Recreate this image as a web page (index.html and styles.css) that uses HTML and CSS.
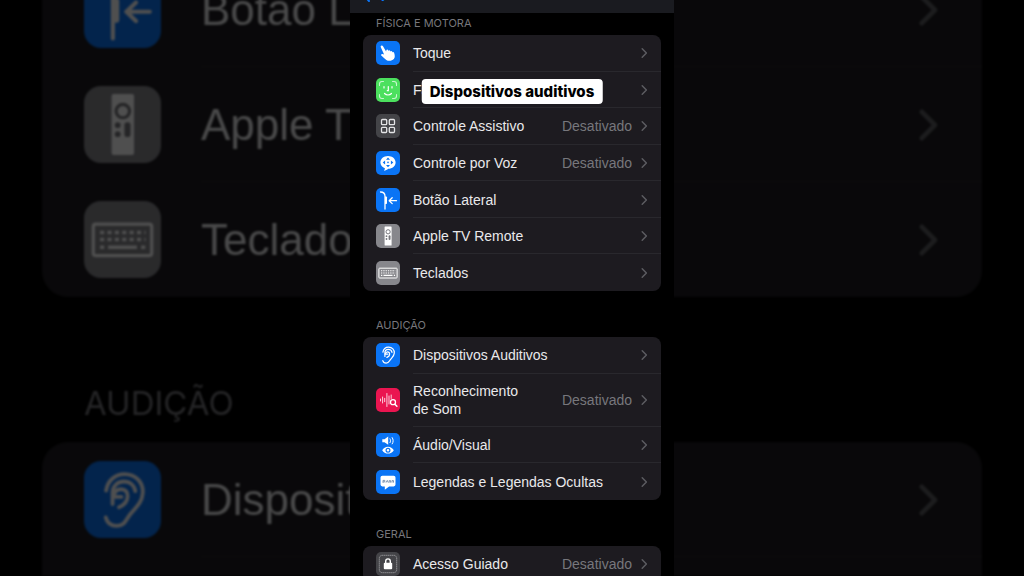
FILE: index.html
```
<!DOCTYPE html>
<html lang="pt-BR">
<head>
  <meta charset="utf-8">
  <title>Acessibilidade</title>
  <link rel="stylesheet" href="styles.css">
</head>
<body>
  <!-- icon set -->
  <svg class="sprite" aria-hidden="true">
    <symbol id="chevron" viewBox="0 0 7 12">
      <path d="M1.200 1.800 5.400 6 1.200 10.200" fill="none" stroke="currentColor" stroke-width="1.500" stroke-linecap="round" stroke-linejoin="round"/>
    </symbol>
    <symbol id="touch" viewBox="0 0 24 24">
      <path fill="#fff" d="M5.200 4.800c.7-.5 1.400-.2 1.800.5l3.100 5.200.3-1.500c.2-.8 1.500-.8 1.700 0l.3.900c.2-.9 1.600-.9 1.900 0l.2.7c.3-.8 1.500-.7 1.800.1l.2.7c.4-.6 1.400-.4 1.600.4.8 2.500 1.100 4.600-.3 6.200-1.800 2-5.300 2.300-7.500.9-1.900-1.200-3.400-2.700-5-4.300-.7-.8.1-1.900 1.100-1.700l1.700.5L4.800 6.300c-.3-.6-.2-1.200.4-1.500z"/>
    </symbol>
    <symbol id="face" viewBox="0 0 24 24">
      <g fill="none" stroke="#fff" stroke-linecap="round">
        <path stroke-width="1.100" opacity=".7" d="M3.500 7.500V6A2.500 2.500 0 0 1 6 3.500h1.500M16.500 3.500H18A2.500 2.500 0 0 1 20.500 6v1.500M20.500 16.500V18a2.500 2.500 0 0 1-2.500 2.500h-1.500M7.500 20.500H6A2.500 2.500 0 0 1 3.500 18v-1.500"/>
        <path stroke-width="1.200" d="M8 8.500v1.500M16 8.500v1.500M12.300 8.500v4.200h-1M8.500 15.500c2 1.900 5 1.900 7 0"/>
      </g>
    </symbol>
    <symbol id="switch" viewBox="0 0 24 24">
      <g fill="none" stroke="#e4e4e6" stroke-width="1.300">
        <rect x="5.500" y="5.500" width="5.200" height="5.200" rx="1"/>
        <rect x="13.300" y="5.500" width="5.200" height="5.200" rx="1"/>
        <rect x="5.500" y="13.300" width="5.200" height="5.200" rx="1"/>
        <rect x="13.300" y="13.300" width="5.200" height="5.200" rx="1"/>
      </g>
    </symbol>
    <symbol id="voice" viewBox="0 0 24 24">
      <path fill="#fff" d="M12 5c4.300 0 7.600 2.800 7.600 6.400s-3.300 6.300-7.300 6.400c-1.200 1.200-2.700 1.800-4.400 1.900.7-.7 1-1.600 1-2.500-2.700-1-4.500-3.200-4.500-5.800C4.400 7.800 7.700 5 12 5z"/>
      <path fill="#0a74f5" d="m12 6.600 2 2.200h-4zM12 16.200l2-2.200h-4zM6.700 11.400l2.400-2v4zM17.300 11.400l-2.400-2v4z"/>
      <circle cx="12" cy="11.400" r=".8" fill="#0a74f5"/>
    </symbol>
    <symbol id="side" viewBox="0 0 24 24">
      <path fill="none" stroke="#fff" stroke-width="1.300" stroke-linecap="round" stroke-linejoin="round" d="M4.500 4c2.700 0 4.500 1.300 4.500 4.200V21M20.500 12.700h-7M16.200 9.800l-3 2.900 3 2.900"/>
      <path fill="#fff" d="M9 8.500h1.200q.8 0 .8.800v6q0 .8-.8.800H9z"/>
    </symbol>
    <symbol id="remote" viewBox="0 0 24 24">
      <rect x="8.600" y="2.500" width="7" height="19" rx=".6" fill="#fff"/>
      <circle cx="12.100" cy="7.800" r="2.100" fill="none" stroke="#77777c" stroke-width="1"/>
      <g fill="#77777c">
        <circle cx="10.500" cy="12.200" r=".9"/>
        <circle cx="10.500" cy="15" r=".9"/>
        <rect x="12.600" y="11.300" width="1.900" height="4.600" rx=".9"/>
      </g>
    </symbol>
    <symbol id="keyboard" viewBox="0 0 24 24">
      <rect x="2.900" y="7.200" width="18.200" height="9.800" rx=".7" fill="none" stroke="#fff" stroke-width="1"/>
      <path stroke="#fff" stroke-width="1.100" stroke-dasharray="1.300 1" d="M5 9.800h14.200M5 12h14.200"/>
      <path stroke="#fff" stroke-width="1.100" d="M5 14.400h1.300M7.500 14.400h9M17.800 14.400h1.300"/>
    </symbol>
    <symbol id="ear" viewBox="0 0 24 24">
      <g fill="none" stroke="#fff" stroke-width="1.200" stroke-linecap="round" stroke-linejoin="round">
        <path d="M6.900 9.200C7.400 6 9.800 4.100 12.600 4.100c3.500 0 6 2.600 5.700 6-.2 2.900-2.300 4.500-3.900 6.500-1.200 1.500-1.600 3.600-4.200 3.600-1.800 0-3-.9-3.400-2.600"/>
        <path d="M8.900 13.400V9.900c0-2 1.500-3.500 3.500-3.500 1.900 0 3.300 1.200 3.600 3"/>
        <path d="M9.200 10.900c.3-1.400 1.300-2.100 2.400-2.100 1.300 0 2 .9 2 2.100 0 1.700-1.300 2.900-2.700 3.500M9.200 11.200h2.500"/>
      </g>
    </symbol>
    <symbol id="sound" viewBox="0 0 24 24">
      <g fill="none" stroke="#fff" stroke-linecap="round" stroke-width="1">
        <path opacity=".8" d="M4.500 11v2M6.600 9v6M8.700 10.300v3.400M10.900 5.500v13M13 8v8M15.200 7v3.500"/>
        <circle cx="17" cy="14.200" r="2.500" stroke-width="1.300"/>
        <path stroke-width="1.500" d="m18.900 16.200 2 2"/>
      </g>
    </symbol>
    <symbol id="av" viewBox="0 0 24 24">
      <path fill="#fff" d="M6.300 6.300h2.200l3.700-2.700v8.200L8.500 9.300H6.300z"/>
      <path fill="none" stroke="#fff" stroke-width="1" stroke-linecap="round" d="M14 5.800c.7 1.200.7 2.700 0 3.900M16.200 4.600c1.300 1.900 1.300 4.400 0 6.300"/>
      <path fill="#fff" d="M6.200 17.200c1.300-2.200 3.400-3.400 5.800-3.400s4.500 1.200 5.800 3.400c-1.300 2.200-3.400 3.400-5.800 3.400s-4.500-1.200-5.800-3.400z"/>
      <circle cx="12" cy="17.200" r="1.900" fill="none" stroke="#0a74f5" stroke-width="1.200"/>
    </symbol>
    <symbol id="captions" viewBox="0 0 24 24">
      <path fill="#fff" d="M6.300 5.800h11.400a1.800 1.800 0 0 1 1.800 1.800v7a1.800 1.800 0 0 1-1.800 1.800h-4.600L8.800 19.800v-3.400H6.300a1.800 1.800 0 0 1-1.800-1.800v-7a1.800 1.800 0 0 1 1.800-1.800z"/>
      <path fill="none" stroke="#7f95b2" stroke-width="1" d="M7 12.800v-2.400h1.800v1.500H7M10 12.600l1.300-2.200 1 2.200M13.200 12.600v-2h1.400v2M16 12.600v-2h1.500v2"/>
    </symbol>
    <symbol id="lock" viewBox="0 0 24 24">
      <rect x="3.300" y="3.300" width="17.400" height="17.400" rx="3" fill="none" stroke="#b4b4b8" stroke-width=".9" stroke-dasharray="1.100 .9"/>
      <rect x="7.800" y="10.800" width="8.400" height="6.500" rx="1" fill="#fff"/>
      <path fill="none" stroke="#fff" stroke-width="1.400" d="M9.700 11V9.200a2.300 2.300 0 0 1 4.600 0V11"/>
    </symbol>
  </svg>

  <!-- enlarged copy of the list behind the phone -->
  <div class="backdrop" aria-hidden="true">
    <div class="card">
      <div class="row"><svg class="icon blue"><use href="#side"/></svg><div class="body"><span class="name">Botão Lateral</span><svg class="chevron"><use href="#chevron"/></svg></div></div>
      <div class="row"><svg class="icon gray"><use href="#remote"/></svg><div class="body"><span class="name">Apple TV Remote</span><svg class="chevron"><use href="#chevron"/></svg></div></div>
      <div class="row"><svg class="icon gray"><use href="#keyboard"/></svg><div class="body"><span class="name">Teclados</span><svg class="chevron"><use href="#chevron"/></svg></div></div>
    </div>
    <div class="heading">AUDIÇÃO</div>
    <div class="card open">
      <div class="row"><svg class="icon blue"><use href="#ear"/></svg><div class="body"><span class="name">Dispositivos Auditivos</span><svg class="chevron"><use href="#chevron"/></svg></div></div>
    </div>
  </div>

  <main class="phone">
    <header class="navbar">
      <a href="#" class="back">
        <svg viewBox="0 0 8 14"><path d="M7 1 1.500 7 7 13" fill="none" stroke="currentColor" stroke-width="2" stroke-linecap="round"/></svg>
        Ajustes
      </a>
    </header>

    <section>
      <h2 class="heading">FÍSICA E MOTORA</h2>
      <nav class="card motor">
        <a href="#" class="row"><svg class="icon blue"><use href="#touch"/></svg><div class="body"><span class="name">Toque</span><svg class="chevron"><use href="#chevron"/></svg></div></a>
        <a href="#" class="row"><svg class="icon green"><use href="#face"/></svg><div class="body"><span class="name">Face ID e Atenção</span><svg class="chevron"><use href="#chevron"/></svg></div></a>
        <a href="#" class="row"><svg class="icon dark"><use href="#switch"/></svg><div class="body"><span class="name">Controle Assistivo</span><span class="value">Desativado</span><svg class="chevron"><use href="#chevron"/></svg></div></a>
        <a href="#" class="row"><svg class="icon blue"><use href="#voice"/></svg><div class="body"><span class="name">Controle por Voz</span><span class="value">Desativado</span><svg class="chevron"><use href="#chevron"/></svg></div></a>
        <a href="#" class="row"><svg class="icon blue"><use href="#side"/></svg><div class="body"><span class="name">Botão Lateral</span><svg class="chevron"><use href="#chevron"/></svg></div></a>
        <a href="#" class="row"><svg class="icon gray"><use href="#remote"/></svg><div class="body"><span class="name">Apple TV Remote</span><svg class="chevron"><use href="#chevron"/></svg></div></a>
        <a href="#" class="row"><svg class="icon gray"><use href="#keyboard"/></svg><div class="body"><span class="name">Teclados</span><svg class="chevron"><use href="#chevron"/></svg></div></a>
      </nav>
    </section>

    <section>
      <h2 class="heading">AUDIÇÃO</h2>
      <nav class="card hearing">
        <a href="#" class="row"><svg class="icon blue"><use href="#ear"/></svg><div class="body"><span class="name">Dispositivos Auditivos</span><svg class="chevron"><use href="#chevron"/></svg></div></a>
        <a href="#" class="row"><svg class="icon red"><use href="#sound"/></svg><div class="body"><span class="name">Reconhecimento<br>de Som</span><span class="value">Desativado</span><svg class="chevron"><use href="#chevron"/></svg></div></a>
        <a href="#" class="row"><svg class="icon blue"><use href="#av"/></svg><div class="body"><span class="name">Áudio/Visual</span><svg class="chevron"><use href="#chevron"/></svg></div></a>
        <a href="#" class="row"><svg class="icon blue"><use href="#captions"/></svg><div class="body"><span class="name">Legendas e Legendas Ocultas</span><svg class="chevron"><use href="#chevron"/></svg></div></a>
      </nav>
    </section>

    <section>
      <h2 class="heading">GERAL</h2>
      <nav class="card">
        <a href="#" class="row"><svg class="icon dark"><use href="#lock"/></svg><div class="body"><span class="name">Acesso Guiado</span><span class="value">Desativado</span><svg class="chevron"><use href="#chevron"/></svg></div></a>
      </nav>
    </section>

    <p class="caption">Dispositivos auditivos</p>
  </main>
</body>
</html>
```
FILE: styles.css
```
* {
  box-sizing: border-box;
}

body {
  margin: 0;
  height: 100vh;
  overflow: hidden;
  background-color: #000;
  color: #e9e9eb;
  font-family: "Liberation Sans", Arial, sans-serif;
  font-size: 14px;
  line-height: 18px;
}

a {
  color: inherit;
  text-decoration: none;
}

.sprite {
  position: absolute;
  width: 0;
  height: 0;
}

/* Phone column, 9:16 of the window height */
.phone {
  position: relative;
  width: 56.25vh;
  min-width: 300px;
  height: 100vh;
  margin: 0 auto;
  overflow: hidden;
  background-color: #000;
}

/* scrolled mostly out of view */
.navbar {
  margin-top: -18px;
  padding: 2px 12px 11px;
  background-color: #1a1b20;
}

.back {
  display: flex;
  align-items: flex-end;
  gap: 3px;
  color: #0a74f5;
}

.back svg {
  width: 8px;
  height: 14px;
}

section {
  padding: 0 13px;
}

.heading {
  margin: 0;
  padding: 26px 13px 4px;
  color: #77777c;
  font-family: Inter, "Liberation Sans", sans-serif;
  font-size: 11px;
  font-weight: 400;
  line-height: 16px;
}

.navbar + section .heading {
  padding-top: 2px;
}

/* Lists */
.card {
  display: flex;
  flex-direction: column;
  overflow: hidden;
  border-radius: 8px;
  background-color: #1d1b20;
}

.motor {
  min-height: 256px;
}

.hearing {
  min-height: 163px;
}

.row {
  display: flex;
  flex: 1 0 auto;
  align-items: center;
  gap: 13px;
  min-height: 36px;
  padding-left: 13px;
}

.body {
  display: flex;
  flex: 1;
  align-self: stretch;
  align-items: center;
  gap: 9px;
  padding-top: 1px;
  padding-right: 13px;
  border-bottom: 1px solid #29282d;
}

.row:last-child .body {
  border-bottom-color: transparent;
}

.hearing .row:nth-child(2) {
  min-height: 53px;
}

.name {
  flex: 1;
  white-space: nowrap;
}

.value {
  color: #77777c;
}

.chevron {
  width: 7px;
  height: 12px;
  color: #5c5c61;
}

.icon {
  flex: none;
  width: 24px;
  height: 24px;
  border-radius: 5px;
}

.blue {
  background-color: #0a74f5;
}

.green {
  background-color: #4ce05e;
}

.red {
  background-color: #ea1550;
}

.gray {
  background-color: #87878c;
}

.dark {
  background-color: #444448;
}

/* Backdrop */
.backdrop {
  position: absolute;
  inset: 0;
  z-index: -1;
  display: flex;
  flex-direction: column;
  margin-top: -48px;
  padding: 0 42px;
  overflow: hidden;
  opacity: 0.31;
  filter: blur(1px);
  font-size: 44px;
  line-height: 56px;
}

.backdrop .card {
  flex: none;
  border-radius: 26px;
}

.backdrop .open {
  flex: 1;
  border-radius: 26px 26px 0 0;
}

.backdrop .row {
  flex: none;
  gap: 40px;
  height: 115px;
  padding-left: 42px;
}

.backdrop .body {
  padding-right: 42px;
}

.backdrop .open .body {
  border-bottom-color: #29282d;
}

.backdrop .icon {
  width: 77px;
  height: 77px;
  border-radius: 17px;
}

.backdrop .chevron {
  width: 22px;
  height: 38px;
}

.backdrop .heading {
  padding: 82px 42px 14px;
  font-size: 33px;
  line-height: 49px;
}

/* Subtitle over the list */
.caption {
  position: absolute;
  top: 79px;
  left: 50%;
  transform: translateX(-50%);
  margin: 0;
  padding: 3px 8px;
  border-radius: 4px;
  background-color: #fff;
  color: #000;
  font-family: Inter, "Liberation Sans", sans-serif;
  font-size: 15px;
  font-weight: 800;
  line-height: 19px;
  white-space: nowrap;
}
```
